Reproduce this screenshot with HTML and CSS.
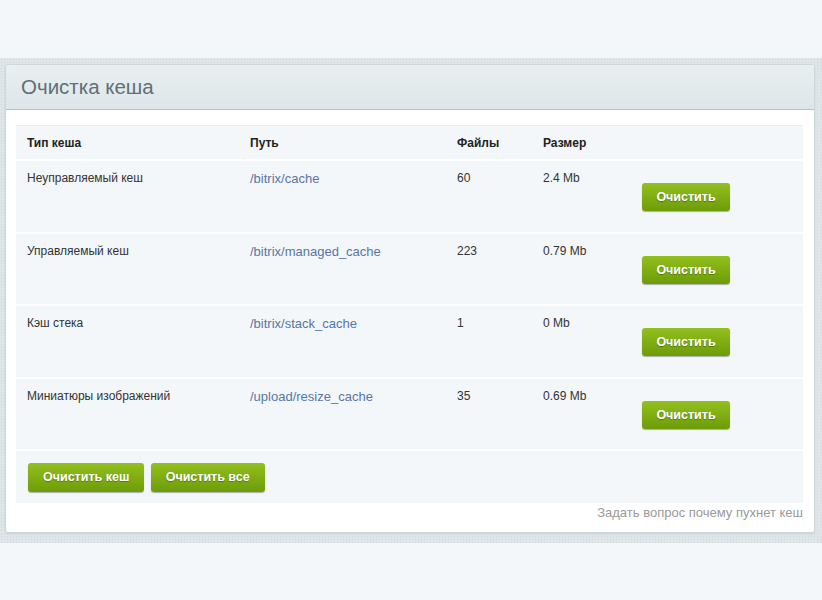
FILE: index.html
```html
<!DOCTYPE html>
<html lang="ru">
<head>
    <meta charset="UTF-8">
    <title>Очистка кеша</title>
    <link rel="stylesheet" href="styles.css">
</head>
<body>

<div class="frame">
    <div class="panel">
        <div class="panel-head">Очистка кеша</div>
        <div class="panel-body">
            <table class="cache-table">
                <colgroup>
                    <col class="c-type">
                    <col class="c-path">
                    <col class="c-files">
                    <col class="c-size">
                    <col>
                </colgroup>
                <thead>
                    <tr>
                        <th>Тип кеша</th>
                        <th>Путь</th>
                        <th>Файлы</th>
                        <th>Размер</th>
                        <th></th>
                    </tr>
                </thead>
                <tbody>
                    <tr>
                        <td>Неуправляемый кеш</td>
                        <td><a href="#">/bitrix/cache</a></td>
                        <td>60</td>
                        <td>2.4 Mb</td>
                        <td class="act"><button class="btn">Очистить</button></td>
                    </tr>
                    <tr>
                        <td>Управляемый кеш</td>
                        <td><a href="#">/bitrix/managed_cache</a></td>
                        <td>223</td>
                        <td>0.79 Mb</td>
                        <td class="act"><button class="btn">Очистить</button></td>
                    </tr>
                    <tr>
                        <td>Кэш стека</td>
                        <td><a href="#">/bitrix/stack_cache</a></td>
                        <td>1</td>
                        <td>0 Mb</td>
                        <td class="act"><button class="btn">Очистить</button></td>
                    </tr>
                    <tr>
                        <td>Миниатюры изображений</td>
                        <td><a href="#">/upload/resize_cache</a></td>
                        <td>35</td>
                        <td>0.69 Mb</td>
                        <td class="act"><button class="btn">Очистить</button></td>
                    </tr>
                </tbody>
                <tfoot>
                    <tr>
                        <td colspan="5">
                            <button class="btn btn-wide">Очистить кеш</button>
                            <button class="btn btn-wide">Очистить все</button>
                        </td>
                    </tr>
                </tfoot>
            </table>
            <div class="ask"><a href="#">Задать вопрос почему пухнет кеш</a></div>
        </div>
    </div>
</div>

</body>
</html>
```

FILE: styles.css
```css
body {
    margin: 0;
    background: #f3f7f9;
    font-family: "Liberation Sans", Arial, sans-serif;
    font-size: 12px;
    color: #333;
}
.frame {
    margin-top: 58px;
    padding: 6px 7px 10px 5px;
    background-color: #dfe6e9;
    background-image: radial-gradient(circle, #cfd8dc 0.8px, transparent 1px);
    background-size: 3px 3px;
}
.panel {
    background: #fff;
    border: 1px solid #cfd7db;
    border-radius: 3px;
    box-shadow: 0 1px 2px rgba(0, 0, 0, 0.08);
}
.panel-head {
    height: 44px;
    line-height: 44px;
    padding-left: 15px;
    font-size: 20.5px;
    color: #5f6f77;
    background: linear-gradient(#e9eff1, #dee6e9);
    border-bottom: 1px solid #b7c0c4;
    border-radius: 3px 3px 0 0;
}
.panel-body {
    padding: 15px 11px 12px 10px;
}
.cache-table {
    width: 100%;
    table-layout: fixed;
    border-collapse: collapse;
    background: #f3f7f9;
    border-top: 1px solid #e6ecef;
}
.c-type { width: 223px; }
.c-path { width: 207px; }
.c-files { width: 86px; }
.c-size { width: 99px; }
.cache-table th {
    height: 33px;
    padding: 0 11px;
    text-align: left;
    font-weight: bold;
    color: #222;
    border-bottom: 2px solid #fff;
}
.cache-table td {
    padding: 10px 11px 0;
    vertical-align: top;
    color: #333;
    border-bottom: 2px solid #fff;
}
.cache-table td.act {
    padding: 22px 11px 20.5px;
}
.cache-table a {
    color: #5a75a5;
    font-size: 13px;
    text-decoration: none;
}
.cache-table tfoot td {
    height: 52px;
    padding: 0 0 0 12px;
    vertical-align: middle;
    border-bottom: none;
}
.btn {
    display: block;
    height: 28px;
    padding: 0 15px;
    border: none;
    border-radius: 3px;
    background: linear-gradient(#93bf1e, #6d9c09);
    box-shadow: 0 1px 1px rgba(0, 0, 0, 0.3);
    color: #fff;
    font-family: "Liberation Sans", Arial, sans-serif;
    font-size: 12.5px;
    font-weight: bold;
    text-shadow: 0 1px 1px rgba(0, 0, 0, 0.3);
    cursor: pointer;
}
.cache-table td.act .btn {
    width: 88px;
    padding: 0;
}
.btn-wide {
    display: inline-block;
    height: 29px;
    margin-right: 3px;
}
.ask {
    text-align: right;
    padding-top: 2px;
}
.ask a {
    color: #9a9a9a;
    font-size: 13px;
    text-decoration: none;
}
```
